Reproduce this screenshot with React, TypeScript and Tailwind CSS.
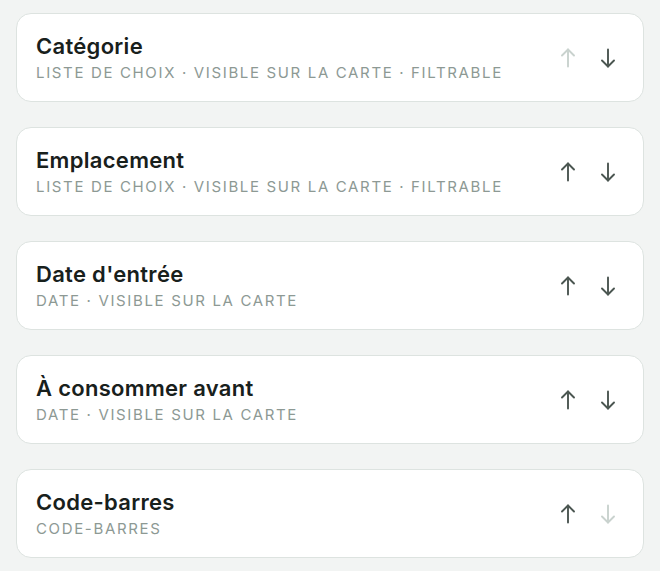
import React from "react";

interface Field {
  title: string;
  meta: string[];
}

const fields: Field[] = [
  { title: "Catégorie", meta: ["Liste de choix", "Visible sur la carte", "Filtrable"] },
  { title: "Emplacement", meta: ["Liste de choix", "Visible sur la carte", "Filtrable"] },
  { title: "Date d'entrée", meta: ["Date", "Visible sur la carte"] },
  { title: "À consommer avant", meta: ["Date", "Visible sur la carte"] },
  { title: "Code-barres", meta: ["Code-barres"] },
];

function Arrow({ down, disabled }: { down?: boolean; disabled?: boolean }) {
  return (
    <button
      type="button"
      disabled={disabled}
      className={
        "flex h-10 w-10 items-center justify-center " +
        (disabled ? "text-[#c9d2ce]" : "text-[#4b5651]")
      }
    >
      <svg
        width="14"
        height="20"
        viewBox="0 0 14 20"
        fill="none"
        stroke="currentColor"
        strokeWidth="1.9"
        strokeLinecap="round"
        strokeLinejoin="round"
        className={down ? "rotate-180" : ""}
      >
        <path d="M7 18.5V1.5" />
        <path d="M1 7.5 7 1.5l6 6" />
      </svg>
    </button>
  );
}

export default function App() {
  return (
    <div
      className="min-h-[571px] bg-[#f2f4f3] px-4 pt-[13px] pb-4"
      style={{ fontFamily: "Inter, 'Noto Sans', sans-serif" }}
    >
      <div className="flex flex-col gap-[25px]">
        {fields.map((f, i) => (
          <div
            key={f.title}
            className="flex h-[89px] items-center rounded-[15px] border border-[#dde3e0] bg-white pl-[19px] pr-[15px]"
          >
            <div className="flex flex-1 flex-col">
              <p className="text-[22px] font-semibold leading-[28px] tracking-[0.3px] text-[#18201c]">
                {f.title}
              </p>
              <p className="mt-[3px] text-[15px] font-normal uppercase leading-[20px] tracking-[0.11em] text-[#8d9994]">
                {f.meta.join(" · ")}
              </p>
            </div>
            <div className="flex">
              <Arrow disabled={i === 0} />
              <Arrow down disabled={i === fields.length - 1} />
            </div>
          </div>
        ))}
      </div>
    </div>
  );
}
